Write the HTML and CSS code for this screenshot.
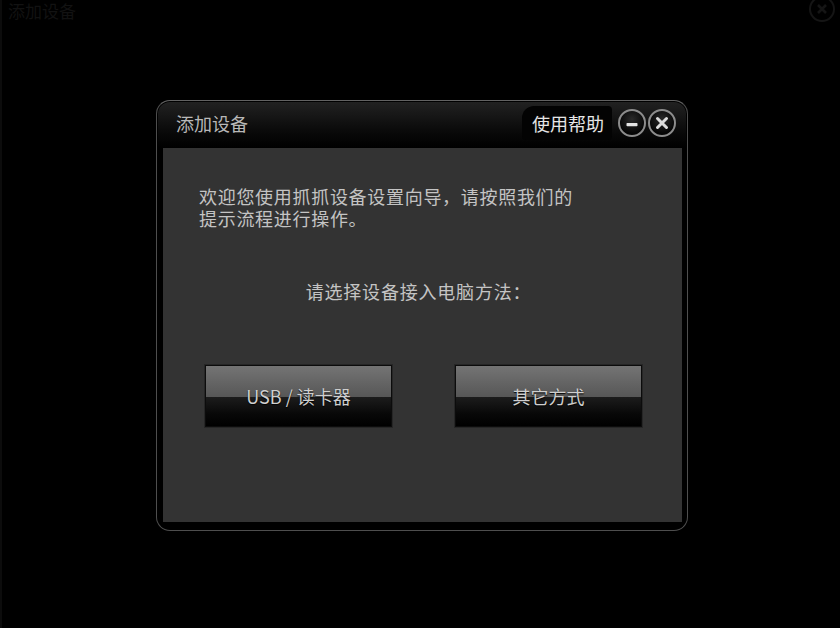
FILE: index.html
```html
<!DOCTYPE html>
<html lang="zh-CN">
<head>
<meta charset="utf-8">
<title>添加设备</title>
<link rel="stylesheet" href="styles.css">
</head>
<body>
<div class="page">
  <div class="ghost-bar">
    <span class="ghost-title">添加设备</span>
    <span class="ghost-close">
      <svg width="28" height="23" viewBox="0 0 28 23"><circle cx="14" cy="9" r="12" fill="none" stroke="#151515" stroke-width="2"/><path d="M10 5 L18 13 M18 5 L10 13" stroke="#151515" stroke-width="2.5"/></svg>
    </span>
  </div>
  <div class="stage">
    <div class="dialog">
      <div class="dialog-head">
        <span class="dialog-title">添加设备</span>
        <div class="head-tools">
          <span class="help-tab">使用帮助</span>
          <span class="round-btn">
            <svg width="28" height="28" viewBox="0 0 28 28"><rect x="8.5" y="14" width="11" height="3.2" rx="0.8" fill="#e4e4e4"/></svg>
          </span>
          <span class="round-btn">
            <svg width="28" height="28" viewBox="0 0 28 28"><path d="M9.5 9.5 L18.5 18.5 M18.5 9.5 L9.5 18.5" stroke="#dcdcdc" stroke-width="3" stroke-linecap="round"/></svg>
          </span>
        </div>
      </div>
      <div class="dialog-body">
        <div class="intro">
          <p class="intro-line">欢迎您使用抓抓设备设置向导，请按照我们的</p>
          <p class="intro-line">提示流程进行操作。</p>
        </div>
        <p class="prompt">请选择设备接入电脑方法：</p>
        <div class="actions">
          <button class="btn">USB / 读卡器</button>
          <button class="btn">其它方式</button>
        </div>
      </div>
    </div>
  </div>
</div>
</body>
</html>
```
FILE: styles.css
```css
* { box-sizing: border-box; }
html, body { margin: 0; padding: 0; background: #000; }
body {
  font-family: "Noto Sans CJK SC", "Liberation Sans", sans-serif;
  width: 840px;
  height: 628px;
  overflow: hidden;
}
.page {
  width: 840px;
  height: 628px;
  display: flex;
  flex-direction: column;
  border-left: 2px solid #0c0c0c;
}
.ghost-bar {
  height: 24px;
  display: flex;
  justify-content: space-between;
  align-items: flex-start;
  padding: 1px 4px 0 6px;
}
.ghost-title {
  color: #121212;
  font-size: 17px;
  line-height: 20px;
}
.ghost-close { display: block; line-height: 0; margin-top: -1px; }
.ghost-close svg { display: block; }
.stage {
  flex: 1;
  display: flex;
  justify-content: center;
  padding-top: 76px;
  padding-left: 2px;
}
.dialog {
  width: 532px;
  height: 431px;
  border: 1px solid #4e4e4e;
  border-top-color: #626262;
  border-radius: 14px;
  background: linear-gradient(#222 0px, #0a0a0a 30px, #000 46px);
  padding: 0 5px 8px 6px;
  display: flex;
  flex-direction: column;
  box-shadow: inset 0 0 0 1px #000;
}
.dialog-head {
  height: 47px;
  display: flex;
  align-items: center;
  justify-content: space-between;
  padding-left: 13px;
  padding-right: 6px;
  flex-shrink: 0;
}
.dialog-title {
  color: #b8b8b8;
  font-size: 18px;
  line-height: 22px;
  margin-top: -4px;
}
.head-tools {
  display: flex;
  align-items: center;
  margin-top: -4px;
}
.help-tab {
  background: #030303;
  color: #e6e6e6;
  font-size: 18px;
  line-height: 22px;
  padding: 6px 8px 6px 10px;
  border-radius: 12px 4px 4px 4px;
  margin-right: 4px;
}
.round-btn {
  width: 28px;
  height: 28px;
  border-radius: 50%;
  border: 2px solid #8c8c8c;
  background: radial-gradient(circle at 50% 35%, #2a2a2a, #050505 70%);
  display: flex;
  align-items: center;
  justify-content: center;
  margin-left: 2px;
  overflow: hidden;
}
.round-btn svg { display: block; flex-shrink: 0; }
.dialog-body {
  flex: 1;
  background: #333333;
  padding: 37px 20px 0 36px;
}
.intro { display: flex; flex-direction: column; }
.intro-line {
  margin: 0;
  color: #c4c4c4;
  font-size: 18px;
  line-height: 22px;
  height: 22px;
  letter-spacing: 0.7px;
  white-space: nowrap;
}
.prompt {
  margin: 51px 0 0 -36px;
  text-align: center;
  color: #c4c4c4;
  font-size: 18px;
  line-height: 22px;
  letter-spacing: 0.8px;
  width: 511px;
}
.actions {
  display: flex;
  gap: 63px;
  margin: 63px 0 0 6px;
}
.btn {
  width: 187px;
  height: 62px;
  border: 1px solid #0c0c0c;
  background: linear-gradient(#747474 0%, #575757 51%, #1c1c1c 52%, #080808 80%, #000 100%);
  color: #cfcfcf;
  font-family: "Noto Sans CJK SC", "Liberation Sans", sans-serif;
  font-size: 18px;
  padding: 0;
  box-shadow: 0 0 0 1px #262626;
  text-shadow: 0 1px 1px #000;
}
```
